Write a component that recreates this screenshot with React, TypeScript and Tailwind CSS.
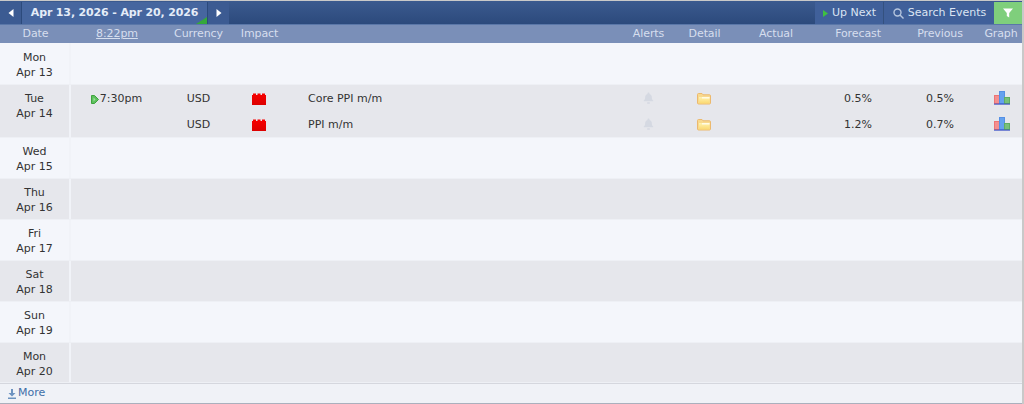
const font = { fontFamily: '"DejaVu Sans", Verdana, sans-serif' };

const cols = "grid grid-cols-[71px_92px_70px_53px_334px_57px_55px_88px_76px_88px_38px]";

function Bell() {
  return (
    <svg width="11" height="12" viewBox="0 0 11 12" fill="#d5d9e2">
      <path d="M5.500 0.500c.6 0 1 .4 1 1v.4c1.500.4 2.300 1.600 2.300 3.100 0 1.700.4 2.700 1.400 3.600v.7H.8v-.7c1-.9 1.400-1.900 1.400-3.600 0-1.500.8-2.700 2.300-3.100v-.4c0-.6.4-1 1-1z" />
      <rect x="4" y="10.200" width="3" height="1.500" rx=".7" />
    </svg>
  );
}

function Folder() {
  return (
    <svg width="14" height="12" viewBox="0 0 14 12">
      <defs>
        <linearGradient id="fld" x1="0" y1="0" x2="0" y2="1">
          <stop offset="0" stopColor="#fff3b0" />
          <stop offset="1" stopColor="#fbd870" />
        </linearGradient>
      </defs>
      <path d="M.5 1.500c0-.6.4-1 1-1h3.500l1 1.300h6.500c.6 0 1 .4 1 1v7.200c0 .6-.4 1-1 1h-11c-.6 0-1-.4-1-1z" fill="#f8d98f" stroke="#ecb96e" />
      <rect x="2" y="4" width="10.500" height="6.500" fill="url(#fld)" />
      <rect x="5" y="4" width="7.500" height="1.500" fill="#fffbe6" />
    </svg>
  );
}

function Chart() {
  return (
    <svg width="16" height="14" viewBox="0 0 16 14">
      <rect x="0.500" y="4.500" width="5" height="8" fill="#f48f8f" stroke="#ee7474" />
      <rect x="5.500" y="0.500" width="5" height="12" fill="#65a2ee" stroke="#5590e6" />
      <rect x="10.500" y="6.500" width="5" height="6" fill="#78c07a" stroke="#5fae62" />
      <rect x="0" y="12.600" width="16" height="1" fill="#2f44c4" />
    </svg>
  );
}

function Factory() {
  return (
    <svg width="14" height="12" viewBox="0 0 14 12">
      <defs>
        <linearGradient id="fac" x1="0" y1="0" x2="0" y2="1">
          <stop offset="0" stopColor="#f80000" />
          <stop offset="1" stopColor="#dc0000" />
        </linearGradient>
      </defs>
      <path d="M0 2h1V0.500h3V2h1.500V0.500h3V2H10V0.500h3V2h1v10H0z" fill="url(#fac)" />
    </svg>
  );
}

function DayCell({ d, date, pt = "pt-[6px]" }: { d: string; date: string; pt?: string }) {
  return (
    <div className={`border-r-2 border-[#f1f3f8] text-center text-[11px] leading-[15px] text-[#333] ${pt}`}>
      <div>{d}</div>
      <div>{date}</div>
    </div>
  );
}

function Day({ d, date, alt, h, pt }: { d: string; date: string; alt?: boolean; h: string; pt?: string }) {
  return (
    <div className={`grid grid-cols-[71px_1fr] border-b border-[#eef0f5] ${alt ? "bg-[#e6e7ec]" : "bg-[#f4f6fb]"} ${h}`}>
      <DayCell d={d} date={date} pt={pt} />
      <div />
    </div>
  );
}

function EventRow({ time, title, f, p, h }: { time?: string; title: string; f: string; p: string; h: string }) {
  return (
    <div className={`${cols} items-center ${h} text-[11px] text-[#333]`}>
      <div />
      <div className="flex items-center justify-center pr-[1px]">
        {time && (
          <>
            <svg width="8" height="9" viewBox="0 0 8 9" className="mr-px">
              <path d="M0.500 0.500h3l4 4-4 4h-3z" fill="#5cc05c" stroke="#3ea33e" />
              <path d="M2.500 2.500l2 2-2 2z" fill="#9fe09f" />
            </svg>
            <span>{time}</span>
          </>
        )}
      </div>
      <div className="pl-[1px] text-center">USD</div>
      <div className="flex justify-center pr-[2px]">
        <Factory />
      </div>
      <div className="pl-[22px]">{title}</div>
      <div className="flex justify-center pb-[3px]">
        <Bell />
      </div>
      <div className="flex justify-center pr-[2px]">
        <Folder />
      </div>
      <div />
      <div className="pr-[24px] text-right">{f}</div>
      <div className="pr-[30px] text-right">{p}</div>
      <div className="flex justify-center pr-[2px] pb-[2px]">
        <Chart />
      </div>
    </div>
  );
}

export default function App() {
  return (
    <div style={font} className="h-[404px] w-[1024px] overflow-hidden bg-[#c9c9c9] pt-px pr-[2px] pb-px">
      <div className="flex h-[23px] items-stretch bg-gradient-to-b from-[#3b5a8f] to-[#2c4a7c] pt-px text-[11px] text-[#dbe4f3]">
        <div className="flex w-[22px] items-center justify-center border-r border-[#2c4a7c] bg-[#3c5b92]">
          <svg width="6" height="8" viewBox="0 0 6 8"><path d="M5.500 0v8L0.500 4z" fill="#fff" /></svg>
        </div>
        <div className="relative flex w-[185px] items-center justify-center bg-[#46669f] font-bold tracking-[-0.15px] text-[#e4ecf8]">
          Apr 13, 2026 - Apr 20, 2026
          <svg width="11" height="7" viewBox="0 0 11 7" className="absolute right-0 bottom-0"><path d="M11 0v7H0z" fill="#35a83a" /></svg>
        </div>
        <div className="flex w-[22px] items-center justify-center border-l border-[#2c4a7c] bg-[#3c5b92]">
          <svg width="6" height="8" viewBox="0 0 6 8"><path d="M.5 0v8L5.500 4z" fill="#fff" /></svg>
        </div>
        <div className="flex-1" />
        <div className="flex w-[69px] items-center justify-center gap-[4px] border-r border-[#34517f] bg-[#40609a] pl-[1px]">
          <svg width="5" height="7" viewBox="0 0 5 7"><path d="M0 0v7l5-3.500z" fill="#3fc040" /></svg>
          <span>Up Next</span>
        </div>
        <div className="flex w-[110px] items-center justify-center gap-[4px] bg-[#40609a] pl-[1px]">
          <svg width="11" height="11" viewBox="0 0 11 11" fill="none" stroke="#b5c5de" strokeWidth="1.400">
            <circle cx="4.500" cy="4.500" r="3.500" />
            <path d="M7 7l3.500 3.500" />
          </svg>
          <span>Search Events</span>
        </div>
        <div className="flex w-[28px] items-center justify-center bg-[#7fcf7c]">
          <svg width="10" height="10" viewBox="0 0 10 10"><path d="M0 .5h10L6.200 5v4.500L3.800 8V5z" fill="#fff" /></svg>
        </div>
      </div>

      <div className={`${cols} h-[19px] items-center border-t border-[#5a77a8] bg-[#7a8fb8] text-center text-[11px] tracking-[-0.1px] text-[#d6deee]`}>
        <div>Date</div>
        <div className="underline">8:22pm</div>
        <div className="pl-[1px]">Currency</div>
        <div>Impact</div>
        <div />
        <div>Alerts</div>
        <div>Detail</div>
        <div>Actual</div>
        <div>Forecast</div>
        <div>Previous</div>
        <div className="pr-[4px]">Graph</div>
      </div>

      <Day d="Mon" date="Apr 13" h="h-[42px]" pt="pt-[7px]" />
      <div className="grid h-[53px] grid-cols-[71px_1fr] border-b border-[#eef0f5] bg-[#e6e7ec]">
        <DayCell d="Tue" date="Apr 14" />
        <div className="-ml-[71px] pt-px">
          <EventRow time="7:30pm" title="Core PPI m/m" f="0.5%" p="0.5%" h="h-[26px]" />
          <EventRow title="PPI m/m" f="1.2%" p="0.7%" h="h-[26px]" />
        </div>
      </div>
      <Day d="Wed" date="Apr 15" h="h-[41px]" />
      <Day d="Thu" date="Apr 16" alt h="h-[41px]" />
      <Day d="Fri" date="Apr 17" h="h-[41px]" />
      <Day d="Sat" date="Apr 18" alt h="h-[41px]" />
      <Day d="Sun" date="Apr 19" h="h-[41px]" />
      <Day d="Mon" date="Apr 20" alt h="h-[40px]" />
      <div className="flex h-[21px] items-center gap-[2px] border-t border-b border-t-[#d5d7de] border-b-[#aab0bd] bg-[#f0f2f7] pl-[8px] text-[11px] text-[#3f6fa8]">
        <svg width="8" height="10" viewBox="0 0 8 10"><path d="M3 0h2v4h2.500L4 7.500.5 4H3zM0 8.500h8V10H0z" fill="#6d93c0" /></svg>
        <span>More</span>
      </div>
    </div>
  );
}
